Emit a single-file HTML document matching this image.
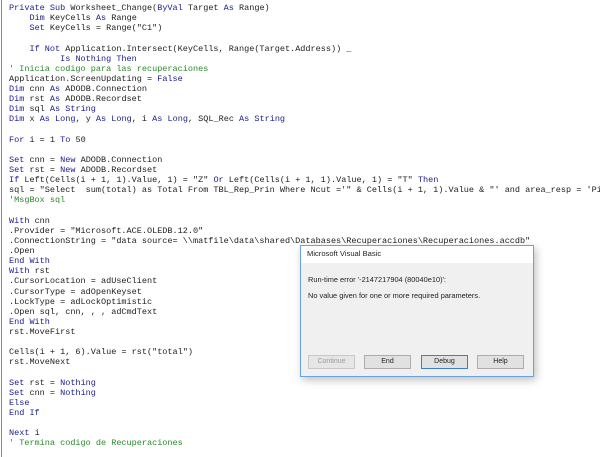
<!DOCTYPE html>
<html><head><meta charset="utf-8"><style>
html,body{margin:0;padding:0;background:#fff;width:600px;height:457px;overflow:hidden}
.edge{position:absolute;left:1px;top:0;width:1px;height:457px;background:#888}
pre{position:absolute;left:9px;top:3px;margin:0;font-family:"Liberation Mono",monospace;font-size:8.53px;line-height:10.12px;color:#222;white-space:pre}
.k{color:#1c1c8c}.c{color:#2a8a2a}
.dlg{position:absolute;left:300px;top:245px;width:232px;height:130px;background:#f0f0f0;border:1px solid #6aa3dc;box-shadow:2px 3px 8px rgba(0,0,0,.25);font-family:"Liberation Sans",sans-serif;font-size:7.4px;color:#222}
.tt{height:17px;background:#fff;padding-left:6px;line-height:16px;font-size:7.6px}
.m{position:absolute;left:7px}
.b{position:absolute;top:109px;width:45px;height:12px;border:1px solid #adadad;background:#e1e1e1;text-align:center;line-height:12px;font-size:7px}
</style></head><body>
<div class="edge"></div>
<pre><span class="k">Private Sub</span> Worksheet_Change(<span class="k">ByVal</span> Target <span class="k">As</span> Range)
    <span class="k">Dim</span> KeyCells <span class="k">As</span> Range
    <span class="k">Set</span> KeyCells = Range("C1")

    <span class="k">If Not</span> Application.Intersect(KeyCells, Range(Target.Address)) _
          <span class="k">Is Nothing Then</span>
<span class="c">' Inicia codigo para las recuperaciones</span>
Application.ScreenUpdating = <span class="k">False</span>
<span class="k">Dim</span> cnn <span class="k">As</span> ADODB.Connection
<span class="k">Dim</span> rst <span class="k">As</span> ADODB.Recordset
<span class="k">Dim</span> sql <span class="k">As String</span>
<span class="k">Dim</span> x <span class="k">As Long</span>, y <span class="k">As Long</span>, i <span class="k">As Long</span>, SQL_Rec <span class="k">As String</span>

<span class="k">For</span> i = 1 <span class="k">To</span> 50

<span class="k">Set</span> cnn = <span class="k">New</span> ADODB.Connection
<span class="k">Set</span> rst = <span class="k">New</span> ADODB.Recordset
<span class="k">If</span> Left(Cells(i + 1, 1).Value, 1) = "Z" <span class="k">Or</span> Left(Cells(i + 1, 1).Value, 1) = "T" <span class="k">Then</span>
sql = "Select  sum(total) as Total From TBL_Rep_Prin Where Ncut ='" &amp; Cells(i + 1, 1).Value &amp; "' and area_resp = 'Pi
<span class="c">'MsgBox sql</span>

<span class="k">With</span> cnn
.Provider = "Microsoft.ACE.OLEDB.12.0"
.ConnectionString = "data source= \\matfile\data\shared\Databases\Recuperaciones\Recuperaciones.accdb"
.Open
<span class="k">End With</span>
<span class="k">With</span> rst
.CursorLocation = adUseClient
.CursorType = adOpenKeyset
.LockType = adLockOptimistic
.Open sql, cnn, , , adCmdText
<span class="k">End With</span>
rst.MoveFirst

Cells(i + 1, 6).Value = rst("total")
rst.MoveNext

<span class="k">Set</span> rst = <span class="k">Nothing</span>
<span class="k">Set</span> cnn = <span class="k">Nothing</span>
<span class="k">Else</span>
<span class="k">End If</span>

<span class="k">Next</span> i
<span class="c">' Termina codigo de Recuperaciones</span></pre>
<div class="dlg">
<div class="tt">Microsoft Visual Basic</div>
<div class="m" style="top:29px">Run-time error '-2147217904 (80040e10)':</div>
<div class="m" style="top:45px">No value given for one or more required parameters.</div>
<div class="b" style="left:7px;color:#9a9a9a;border-color:#c8c8c8;background:#e6e6e6">Continue</div>
<div class="b" style="left:63px">End</div>
<div class="b" style="left:120px;border:1px solid #3c7fd0;">Debug</div>
<div class="b" style="left:176px">Help</div>
</div>
</body></html>
